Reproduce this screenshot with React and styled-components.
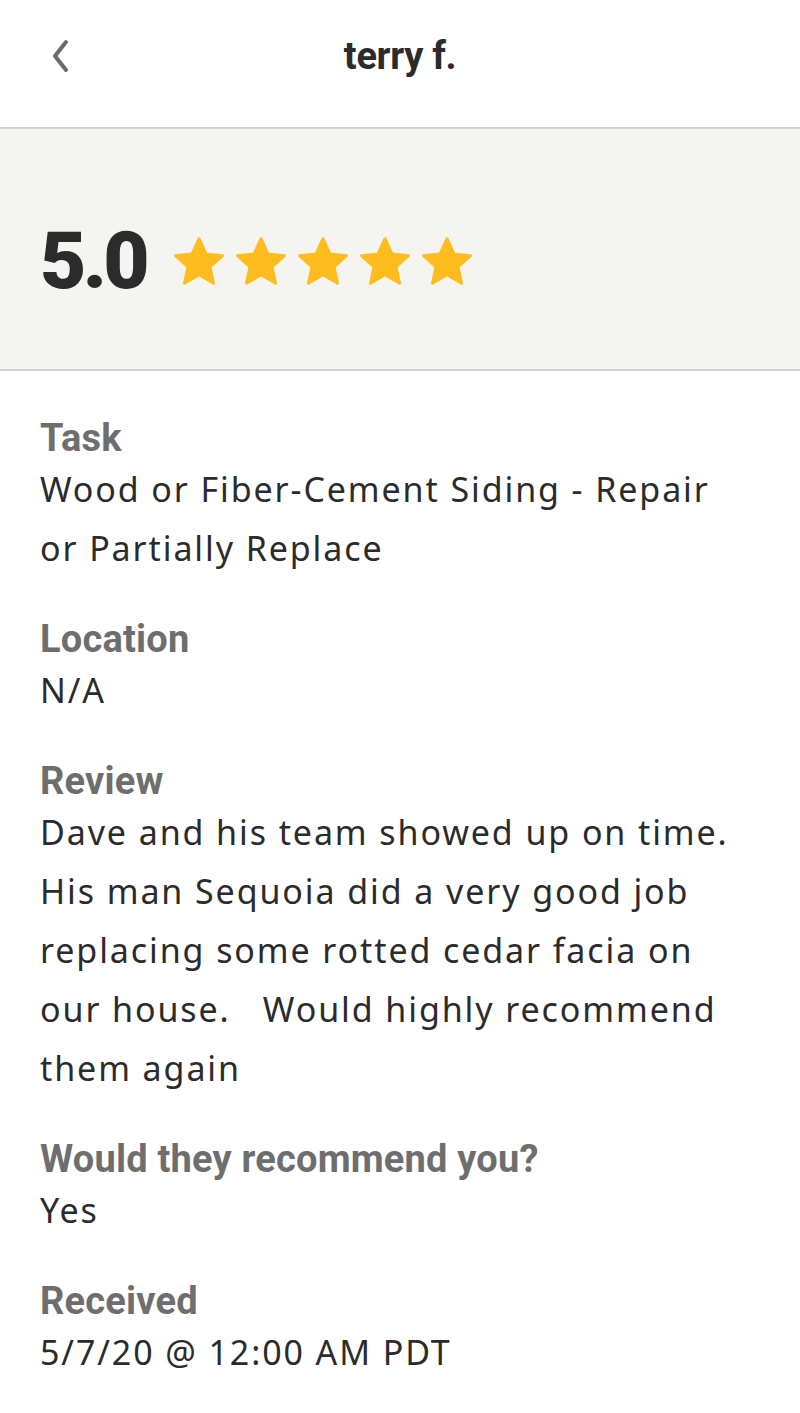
import React from "react";
import styled, { createGlobalStyle } from "styled-components";

const GlobalStyle = createGlobalStyle`
  html, body {
    margin: 0;
    padding: 0;
    background: #ffffff;
  }
  body {
    font-family: "Noto Sans", "Liberation Sans", sans-serif;
    -webkit-font-smoothing: antialiased;
  }
`;

const Page = styled.div`
  display: flex;
  flex-direction: column;
  width: 800px;
  min-height: 1413px;
  background: #ffffff;
`;

const Header = styled.header`
  position: relative;
  display: flex;
  align-items: center;
  justify-content: center;
  height: 127px;
  border-bottom: 2px solid #d2d2d0;
`;

const BackButton = styled.button`
  position: absolute;
  left: 40px;
  top: 36px;
  display: flex;
  align-items: center;
  justify-content: center;
  width: 40px;
  height: 40px;
  padding: 0;
  border: none;
  background: none;
`;

const Title = styled.h1`
  margin: 0 0 16px;
  font-family: Roboto, "Liberation Sans", sans-serif;
  font-size: 38px;
  font-weight: 700;
  letter-spacing: -0.3px;
  color: #2b2b2b;
`;

const RatingBand = styled.section`
  display: flex;
  align-items: center;
  gap: 28px;
  height: 242px;
  padding: 24px 40px 0;
  box-sizing: border-box;
  background: #f4f4f1;
  border-bottom: 2px solid #d2d2d0;
`;

const Score = styled.span`
  font-family: Roboto, "Liberation Sans", sans-serif;
  font-size: 80px;
  font-weight: 900;
  letter-spacing: -3.7px;
  color: #2b2b2b;
`;

const Stars = styled.div`
  display: flex;
  gap: 12px;
`;

const Details = styled.main`
  display: flex;
  flex-direction: column;
  gap: 40px;
  padding: 46px 40px 40px;
`;

const Field = styled.div`
  display: flex;
  flex-direction: column;
`;

const Label = styled.div`
  font-family: Roboto, "Liberation Sans", sans-serif;
  font-size: 38px;
  line-height: 43px;
  font-weight: 700;
  letter-spacing: 0.2px;
  color: #6e6e6e;
`;

const Value = styled.div`
  font-size: 34px;
  line-height: 59px;
  font-weight: 400;
  letter-spacing: 1.9px;
  color: #2b2b2b;
  white-space: pre-wrap;
`;

function Star() {
  return (
    <svg width="50" height="48" viewBox="1.7 1.6 20.6 19.6">
      <path
        fill="#ffbc1f"
        stroke="#ffbc1f"
        strokeWidth="1.2"
        strokeLinejoin="round"
        d="M12 2.2l2.85 6.3 6.85.7-5.15 4.6 1.45 6.8L12 17.1l-6 3.5 1.45-6.8L2.3 9.2l6.85-.7z"
      />
    </svg>
  );
}

const fields = [
  { label: "Task", value: "Wood or Fiber-Cement Siding - Repair\nor Partially Replace" },
  { label: "Location", value: "N/A" },
  {
    label: "Review",
    value:
      "Dave and his team showed up on time.\nHis man Sequoia did a very good job\nreplacing some rotted cedar facia on\nour house.   Would highly recommend\nthem again",
  },
  { label: "Would they recommend you?", value: "Yes" },
  { label: "Received", value: "5/7/20 @ 12:00 AM PDT" },
];

export default function App() {
  return (
    <Page>
      <GlobalStyle />
      <Header>
        <BackButton aria-label="Back">
          <svg width="24" height="36" viewBox="0 0 24 36">
            <path
              d="M18 4 L7 18 L18 32"
              fill="none"
              stroke="#6b6b6b"
              strokeWidth="4"
              strokeLinecap="round"
              strokeLinejoin="round"
            />
          </svg>
        </BackButton>
        <Title>terry f.</Title>
      </Header>
      <RatingBand>
        <Score>5.0</Score>
        <Stars>
          {[0, 1, 2, 3, 4].map((i) => (
            <Star key={i} />
          ))}
        </Stars>
      </RatingBand>
      <Details>
        {fields.map((f) => (
          <Field key={f.label}>
            <Label>{f.label}</Label>
            <Value>{f.value}</Value>
          </Field>
        ))}
      </Details>
    </Page>
  );
}
